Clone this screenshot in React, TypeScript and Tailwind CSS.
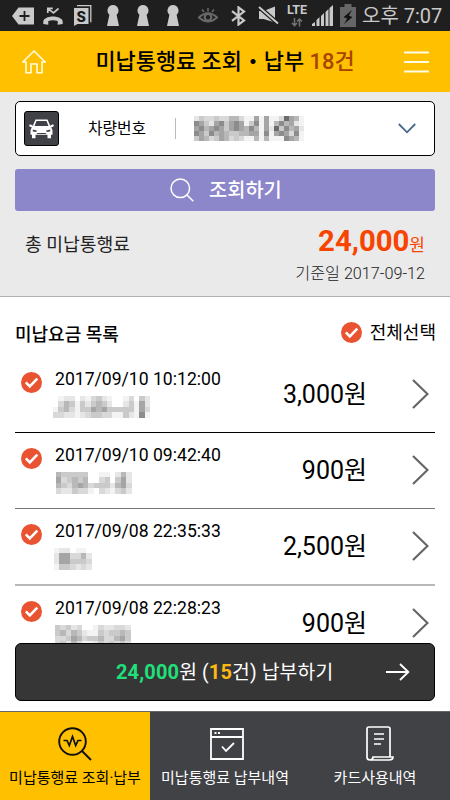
import type { ReactNode } from "react";

// Each digit is one tile of a pixelated field: 0 is blank, 9 is darkest.
const shades = ["transparent", "#f3f3f3", "#e6e6e6", "#d9d9d9", "#cacaca", "#b8b8b8", "#a5a5a5", "#8c8c8c", "#6b6b6b", "#3d3d3d"];

const plate = [
  "2433433553116161138651",
  "7642674676147161575621",
  "6756764676575162847562",
  "7647565445566171676371",
  "4653465343115151117651",
];

const trips = [
  { time: "2017/09/10 10:12:00", amount: "3,000원", line: "border-b border-black", indent: "-ml-[2px]", place: ["012202134210013042", "035414245420024162", "145314465644444163", "332212344331142171"] },
  { time: "2017/09/10 09:42:40", amount: "900원", line: "border-b border-[#777]", indent: "ml-px", place: ["54444400110252", "63454500340462", "54356534442563", "32243310321342"] },
  { time: "2017/09/08 22:35:33", amount: "2,500원", line: "border-b-2 border-[#b8b8b8]", indent: "-ml-px", place: ["1220110", "2663352", "2664443", "1443232"] },
  { time: "2017/09/08 22:28:23", amount: "900원", line: "border-b border-[#aaa]", indent: "ml-0", place: ["43423001322332", "45354211434454", "33465344533564", "34253112434343"] },
];

function Mosaic({ rows, size }: { rows: string[]; size: number }) {
  return (
    <svg width={rows[0].length * size} height={rows.length * size} shapeRendering="crispEdges" aria-hidden="true">
      {rows.map((row, y) =>
        row.split("").map((s, x) => (
          <rect key={`${x}-${y}`} x={x * size} y={y * size} width={size} height={size} fill={shades[Number(s)]} />
        )),
      )}
    </svg>
  );
}

function Check() {
  return (
    <svg width="21" height="21" viewBox="0 0 21 21" fill="none" className="shrink-0">
      <circle cx="10.5" cy="10.5" r="10.5" fill="#e95332" />
      <path d="m4.800 10.300 4 4 7.500-7.700" stroke="#fff" strokeWidth="2.600" />
    </svg>
  );
}

function Keyhole() {
  return (
    <svg width="12" height="21" viewBox="0 0 12 21" fill="#c9c9c9">
      <path d="M6 0a5.600 5.600 0 0 1 3.600 9.800L12 21H0L2.400 9.800A5.600 5.600 0 0 1 6 0Z" />
    </svg>
  );
}

function StatusBar() {
  return (
    <div className="flex h-[31px] shrink-0 items-center bg-[#1f1f1f] pl-[12px] text-[#c9c9c9]">
      <svg width="22" height="18" viewBox="0 0 22 18">
        <path d="M0 9 6.500.5H22v17H6.500Z" fill="#c9c9c9" />
        <path d="M12.500 4v10M7.500 9h10" stroke="#1f1f1f" strokeWidth="1.800" />
      </svg>
      <svg className="ml-[9px]" width="20" height="18" viewBox="0 0 20 18" fill="none">
        <path d="M.3 14.500C.3 11.800 5 9.500 10 9.500s9.700 2.300 9.700 5v2.500l-5 .7v-3.600c-3-1.200-6.400-1.200-9.400 0v3.600l-5-.7Z" fill="#c9c9c9" />
        <path d="M15.500 1.500 10.500 6 5.300 1.800M4.800 6V1.300h5" stroke="#c9c9c9" strokeWidth="1.700" />
      </svg>
      <svg className="ml-[11px]" width="18" height="21" viewBox="0 0 18 21">
        <path d="M3 .7h13.800v16.500" fill="none" stroke="#c9c9c9" strokeWidth="1.300" />
        <path d="M0 3h14.500v16H3.500L0 21Z" fill="#c9c9c9" />
        <text x="7.300" y="16.500" textAnchor="middle" fontSize="15" fontWeight="900" fill="#1a1a1a" className="font-['Roboto',sans-serif]">S</text>
      </svg>
      <div className="ml-[15px] flex gap-[18px]">
        <Keyhole />
        <Keyhole />
        <Keyhole />
      </div>
      <svg className="ml-[19px]" width="20" height="18" viewBox="0 0 20 18" fill="none" stroke="#686868">
        <path d="M.8 10.500Q10 2 19.200 10.500 10 18.500.8 10.500Z" strokeWidth="2" />
        <circle cx="10" cy="10.300" r="3.300" strokeWidth="2.200" />
        <path d="M10 1v3.500M4 2.500 6 5M16 2.500 14 5" strokeWidth="1.600" />
      </svg>
      <svg className="ml-[13px]" width="15" height="20" viewBox="0 0 15 20" fill="none" stroke="#c9c9c9" strokeWidth="2.200">
        <path d="m1 5.200 12 9.200-5.500 4.200V1.400L13 5.600 1 14.800" />
      </svg>
      <svg className="ml-[12px]" width="21" height="19" viewBox="0 0 21 19">
        <path d="M1 5h4.500L17 .5v16L5.500 13H1Z" fill="#c9c9c9" />
        <path d="m1 1 19 16.500" stroke="#1f1f1f" strokeWidth="4.500" />
        <path d="m1 1 19 16.500" stroke="#c9c9c9" strokeWidth="2" />
      </svg>
      <div className="ml-[7px] flex w-[22px] flex-col items-center">
        <span className="-mt-px text-[12.500px] leading-[12px] font-bold">LTE</span>
        <svg className="mt-[2px]" width="12" height="9" viewBox="0 0 12 9" fill="none" stroke="#747474" strokeWidth="1.500">
          <path d="M3.500 0v7.500M1 5l2.500 2.600L6 5M8.500 8.500V1M6 3.500 8.500 1 11 3.500" />
        </svg>
      </div>
      <svg className="ml-[4px]" width="21" height="21" viewBox="0 0 21 21" fill="#c9c9c9">
        <path d="M0 21v-2l3-2v4ZM4.500 21v-6l3-3v9ZM9 21V11l3-3v13ZM13.500 21V7l3-3v17ZM17.500 21V3L21 0v21Z" />
      </svg>
      <svg className="ml-[7px]" width="16" height="23" viewBox="0 0 16 23">
        <path d="M4.500 0h7v3H16v20H0V3h4.500Z" fill="#666" />
        <path d="M12 6 3.500 13.300l3.800 1.200L4 20l8.500-7-3.700-1.300Z" fill="#111" />
      </svg>
      <span className="ml-[6px] text-[20px] leading-[30px] whitespace-nowrap">오후 7:07</span>
    </div>
  );
}

function TabItem({ label, active, children }: { label: string; active?: boolean; children: ReactNode }) {
  return (
    <button
      type="button"
      className={`flex flex-1 flex-col items-center ${active ? "bg-[#ffc000] text-black" : "bg-[#414246] text-white"}`}
    >
      <span className="mt-[13px] flex h-[37px] items-center">{children}</span>
      <span className="mt-[6px] text-[15px] leading-[20px] whitespace-nowrap">{label}</span>
    </button>
  );
}

export default function App() {
  return (
    <div className="flex h-[800px] w-[450px] flex-col overflow-hidden bg-white font-['Roboto','Noto_Sans_CJK_KR',sans-serif] text-black">
      <StatusBar />

      <header className="flex h-[61px] shrink-0 items-center justify-between bg-[#ffc000] pr-[21px] pl-[22px]">
        <svg width="24" height="24" viewBox="0 0 24 24" fill="none" stroke="#fffde0" strokeWidth="1.600">
          <path d="M12 1 .8 12H4v10.800h5V14h6v8.800h5V12h3.200Z" />
        </svg>
        <h1 className="text-[21.900px] leading-[30px] font-medium whitespace-nowrap">
          미납통행료 조회・납부 <span className="text-[#a84300]">18건</span>
        </h1>
        <svg width="25" height="22" viewBox="0 0 25 22" stroke="#fffde8" strokeWidth="2">
          <path d="M0 1.500h25M0 11h25M0 20.500h25" />
        </svg>
      </header>

      <section className="flex h-[205px] shrink-0 flex-col border-b border-[#b0b0b0] bg-[#eaeaea] px-[15px] pt-[9px]">
        <div className="flex h-[55px] shrink-0 items-center rounded-[5px] border border-black bg-white pl-[8px]">
          <span className="flex h-[35px] w-[35px] items-center justify-center rounded-[3px] border border-black bg-[#404146]">
            <svg width="25" height="20" viewBox="0 0 25 20">
              <path
                d="M6.500.5h12l2.700 6.300 2-1.200c2-.4 2.200 2 0 2.500l-1 .2 1.300 3v4.500h-1.500v3.500h-3.500v-3.500h-12v3.500H3v-3.500H1.500v-4.500l1.300-3-1-.2c-2.200-.5-2-2.900 0-2.500l2 1.200Z"
                fill="#fff"
              />
              <path d="M7.500 2h10l2 5h-14ZM3.800 10.500l4 1-.5 1.500-3.500-.5ZM21.200 10.500l-4 1 .5 1.500 3.500-.5ZM8.500 14h8l1 1h-10Z" fill="#404146" />
            </svg>
          </span>
          <span className="ml-[29px] text-[15.800px] leading-[20px]">차량번호</span>
          <span className="ml-[29px] h-[21px] w-px bg-[#bbb]" />
          <span className="ml-[18px]">
            <Mosaic rows={plate} size={5} />
          </span>
          <svg className="mr-[18px] ml-auto" width="18" height="11" viewBox="0 0 18 11" fill="none" stroke="#46688c" strokeWidth="1.800">
            <path d="m.8 1 8.200 8.300L17.200 1" />
          </svg>
        </div>

        <button type="button" className="mt-[13px] flex h-[42px] shrink-0 items-center rounded-[3px] bg-[#8c86cb] pl-[155px] text-white">
          <svg width="24" height="24" viewBox="0 0 24 24" fill="none" stroke="#fff" strokeWidth="1.500">
            <circle cx="10.300" cy="10.300" r="9.300" />
            <path d="m17 17 6.300 6.300" />
          </svg>
          <span className="ml-[15px] pt-[2px] text-[19.800px] leading-[28px] font-medium">조회하기</span>
        </button>

        <div className="mt-[12px] flex justify-between px-[10px]">
          <span className="mt-[8px] text-[18.200px] leading-[28px] text-[#222]">총 미납통행료</span>
          <div className="flex flex-col items-end">
            <div className="flex h-[36px] items-baseline leading-[36px] text-[#f74400]">
              <span className="text-[29.300px] font-bold">24,000</span>
              <span className="text-[17px]">원</span>
            </div>
            <span className="mt-[4px] text-[16.200px] leading-[22px] font-light text-[#222]">기준일 2017-09-12</span>
          </div>
        </div>
      </section>

      <div className="flex h-[60px] shrink-0 items-center justify-between pt-[11px] pr-[14px] pl-[15px]">
        <h2 className="pt-[4px] text-[18px] leading-[24px] font-medium">미납요금 목록</h2>
        <label className="flex items-center gap-[8px] text-[18px] leading-[24px]">
          <Check />
          전체선택
        </label>
      </div>

      <main className="relative min-h-0 flex-1 px-[15px]">
        <ul className="h-[287px] overflow-hidden">
          {trips.map((trip) => (
            <li key={trip.time} className={`flex h-[76.200px] items-start pt-[15px] pl-[6px] ${trip.line}`}>
              <Check />
              <div className="ml-[13px] flex flex-col">
                <span className="-mt-[4px] text-[17.600px] leading-[22px] whitespace-nowrap">{trip.time}</span>
                <span className={`mt-[6px] block leading-none ${trip.indent}`}>
                  <Mosaic rows={trip.place} size={5.4} />
                </span>
              </div>
              <span className="mt-[10px] ml-auto pr-[45px] text-[25px] leading-[25px] whitespace-nowrap">{trip.amount}</span>
              <svg className="mt-[7px] mr-[6px] shrink-0" width="17" height="30" viewBox="0 0 17 30" fill="none" stroke="#666" strokeWidth="2.200">
                <path d="m1 1 14.500 14L1 29" />
              </svg>
            </li>
          ))}
        </ul>

        <button
          type="button"
          className="absolute inset-x-[15px] bottom-[10px] flex h-[58px] items-center rounded-[6px] border border-black bg-[#363636] pl-[100px] text-white"
        >
          <span className="text-[19.300px] leading-[28px] tracking-[0.15px] whitespace-nowrap">
            <span className="text-[20px] font-bold text-[#20e07b]">24,000</span>원 (
            <span className="text-[20px] font-bold text-[#fdb913]">15</span>건) 납부하기
          </span>
          <svg className="mr-[24px] ml-auto" width="24" height="18" viewBox="0 0 24 18" fill="none" stroke="#fff" strokeWidth="1.900">
            <path d="M0 9h22M14 1l8.300 8-8.300 8" />
          </svg>
        </button>
      </main>

      <nav className="flex h-[89px] shrink-0 border-t border-[#666]">
        <TabItem label="미납통행료 조회·납부" active>
          <svg width="34" height="34" viewBox="0 0 34 34" fill="none" stroke="#111" strokeWidth="1.900">
            <circle cx="14.500" cy="14.500" r="13.300" />
            <path d="m24 24 9 9" />
            <path d="M5.500 13.500H9l2.300 5 3.200-9 3.200 9 2.300-5h3.500" strokeWidth="1.700" />
          </svg>
        </TabItem>
        <TabItem label="미납통행료 납부내역">
          <svg className="ml-[4px]" width="34" height="32" viewBox="0 0 34 32" fill="none" stroke="#fff" strokeWidth="1.800">
            <path d="M1 1h32v30H1ZM1 9h32M4.500 5h2M8 5h2M12 18.500l4 4.500 8-8" />
          </svg>
        </TabItem>
        <TabItem label="카드사용내역">
          <svg className="ml-[10px]" width="28" height="35" viewBox="0 0 28 35" fill="none" stroke="#fff" strokeWidth="1.700">
            <path d="M24 31V3q0-2-2-2H3Q1 1 1 3v28q0 3 3 3h19q4 0 4-3H7q0 3-3 3M8 8h10M8 13h10M8 18h7" />
          </svg>
        </TabItem>
      </nav>
    </div>
  );
}
